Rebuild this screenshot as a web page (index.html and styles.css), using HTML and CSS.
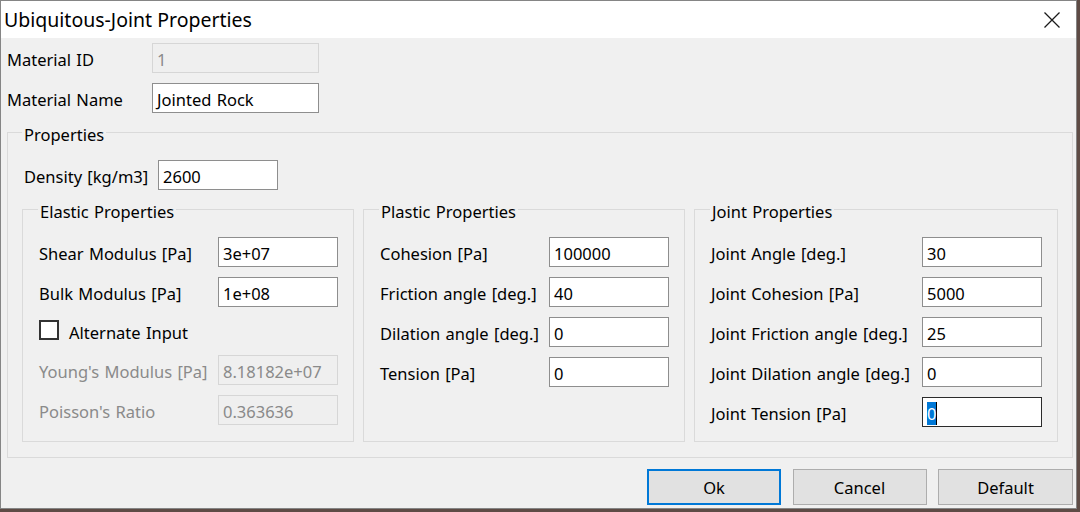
FILE: index.html
```html
<!DOCTYPE html>
<html lang="en">
<head>
<meta charset="utf-8">
<title>Ubiquitous-Joint Properties</title>
<link rel="stylesheet" href="styles.css">
</head>
<body>
<div class="window">
  <div class="titlebar">
    <span class="title">Ubiquitous-Joint Properties</span>
    <svg class="close" width="16" height="16" viewBox="0 0 16 16" aria-label="Close">
      <path d="M0.5 0.5 L15.5 15.5 M15.5 0.5 L0.5 15.5" stroke="#1a1a1a" stroke-width="1.3" fill="none"/>
    </svg>
  </div>
  <div class="content">
    <div class="top-rows">
      <span class="lbl">Material ID</span>
      <div class="field field-top disabled">1</div>
      <span class="lbl">Material Name</span>
      <div class="field field-top">Jointed Rock</div>
    </div>

    <fieldset class="group outer">
      <legend class="legend">Properties</legend>
      <div class="density-row">
        <span class="lbl density-lbl">Density [kg/m3]</span>
        <div class="field">2600</div>
      </div>

      <div class="subgroups">
        <fieldset class="group sub">
          <legend class="legend sub-legend">Elastic Properties</legend>
          <div class="fields">
            <div class="frow"><span class="lbl">Shear Modulus [Pa]</span><div class="field">3e+07</div></div>
            <div class="frow"><span class="lbl">Bulk Modulus [Pa]</span><div class="field">1e+08</div></div>
            <div class="crow"><span class="checkbox"></span><span class="lbl check-lbl">Alternate Input</span></div>
            <div class="frow"><span class="lbl muted">Young's Modulus [Pa]</span><div class="field disabled">8.18182e+07</div></div>
            <div class="frow"><span class="lbl muted">Poisson's Ratio</span><div class="field disabled">0.363636</div></div>
          </div>
        </fieldset>

        <fieldset class="group sub">
          <legend class="legend sub-legend">Plastic Properties</legend>
          <div class="fields">
            <div class="frow"><span class="lbl">Cohesion [Pa]</span><div class="field">100000</div></div>
            <div class="frow"><span class="lbl">Friction angle [deg.]</span><div class="field">40</div></div>
            <div class="frow"><span class="lbl">Dilation angle [deg.]</span><div class="field">0</div></div>
            <div class="frow"><span class="lbl">Tension [Pa]</span><div class="field">0</div></div>
          </div>
        </fieldset>

        <fieldset class="group sub">
          <legend class="legend sub-legend">Joint Properties</legend>
          <div class="fields">
            <div class="frow"><span class="lbl">Joint Angle [deg.]</span><div class="field">30</div></div>
            <div class="frow"><span class="lbl">Joint Cohesion [Pa]</span><div class="field">5000</div></div>
            <div class="frow"><span class="lbl">Joint Friction angle [deg.]</span><div class="field">25</div></div>
            <div class="frow"><span class="lbl">Joint Dilation angle [deg.]</span><div class="field">0</div></div>
            <div class="frow"><span class="lbl">Joint Tension [Pa]</span><div class="field focused"><span class="sel">0</span></div></div>
          </div>
        </fieldset>
      </div>
    </fieldset>

    <div class="buttons">
      <div class="btn btn-default">Ok</div>
      <div class="btn">Cancel</div>
      <div class="btn btn-wide">Default</div>
    </div>
  </div>
</div>
</body>
</html>
```

FILE: styles.css
```css
* { box-sizing: border-box; }

html, body {
  margin: 0;
  padding: 0;
}

body {
  width: 1080px;
  height: 512px;
  overflow: hidden;
  background: #5e4b45;
  font-family: "Noto Sans", "Open Sans", sans-serif;
  font-size: 16.5px;
  word-spacing: 1px;
  color: #000;
}

.window {
  width: 1077px;
  height: 509px;
  border: 1px solid #858585;
  background: #f0f0f0;
  display: flex;
  flex-direction: column;
  overflow: hidden;
}

.titlebar {
  flex: none;
  height: 37px;
  background: #ffffff;
  display: flex;
  align-items: center;
  justify-content: space-between;
  padding: 0 16px 0 3px;
}

.title {
  font-size: 19.5px;
  word-spacing: 0;
  line-height: 37px;
  color: #000;
}

.close {
  display: block;
}

.content {
  padding: 5px 3px 0 6px;
}

.top-rows {
  display: grid;
  grid-template-columns: 145px 167px;
  row-gap: 10px;
}

.lbl {
  display: block;
  line-height: 26px;
  padding-top: 4px;
  white-space: nowrap;
}

.muted {
  color: #8a8a8a;
}

.field {
  width: 120px;
  height: 30px;
  border: 1px solid #8e8e8e;
  background: #ffffff;
  padding: 3px 4px 0 4px;
  line-height: 26px;
  white-space: nowrap;
  overflow: hidden;
}

.field-top {
  width: 167px;
}

.field.disabled {
  background: #efefef;
  border-color: #d6d6d6;
  color: #8a8a8a;
}

.field.focused {
  border-color: #2b2b2b;
}

.sel {
  background: #0078d7;
  color: #ffffff;
  border-right: 1px solid #000;
}

.group {
  margin: 0;
  min-width: 0;
  border: 1px solid #dadada;
}

.outer {
  margin-top: 7px;
  padding: 15px 14px 15px 14px;
}

.legend {
  line-height: 20px;
  padding: 5px 2px 0 2px;
}

.sub-legend {
  margin-left: -1px;
}

.density-row {
  display: grid;
  grid-template-columns: 136px 120px;
}

.density-lbl {
  padding-left: 2px;
}

.subgroups {
  margin-top: 7px;
  display: grid;
  grid-template-columns: 332px 322px 364px;
  column-gap: 9px;
}

.sub {
  padding: 15px 15px 14px 16px;
}

.fields {
  display: flex;
  flex-direction: column;
  gap: 10px;
}

.frow {
  display: flex;
  justify-content: space-between;
  align-items: flex-start;
  height: 30px;
}

.crow {
  display: flex;
  align-items: flex-start;
  height: 28px;
}

.checkbox {
  width: 20px;
  height: 20px;
  margin-top: 3px;
  border: 2px solid #333333;
  background: #ffffff;
  flex: none;
}

.check-lbl {
  margin-left: 10px;
  line-height: 25px;
  padding-top: 3px;
}

.buttons {
  margin-top: 11px;
  display: flex;
  justify-content: flex-end;
  gap: 11.5px;
}

.btn {
  width: 134px;
  height: 36px;
  border: 1px solid #adadad;
  background: #e1e1e1;
  text-align: center;
  line-height: 32px;
  padding-top: 2px;
}

.btn-wide {
  width: 135px;
}

.btn-default {
  border-color: #0078d7;
  box-shadow: inset 0 0 0 1px #0078d7;
}
```
